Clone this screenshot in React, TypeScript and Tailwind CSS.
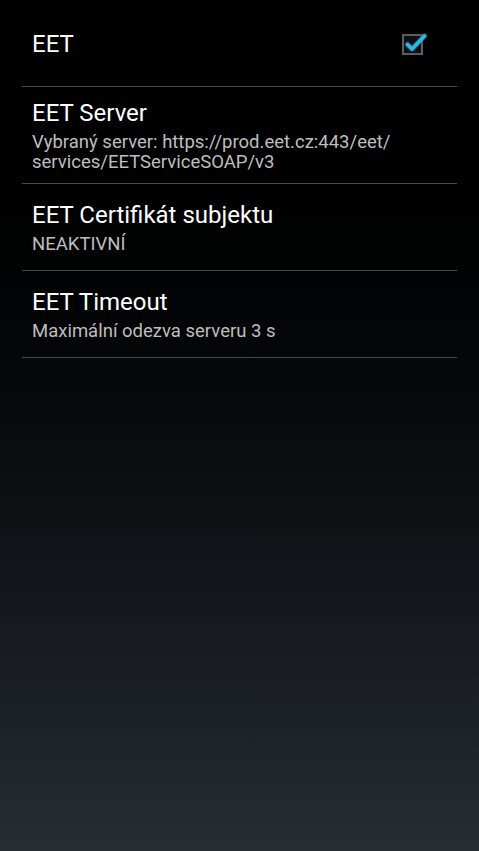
import React from "react";

type Item = { title: string; summary?: string[]; checkbox?: boolean };

const items: Item[] = [
  { title: "EET", checkbox: true },
  {
    title: "EET Server",
    summary: ["Vybraný server: https://prod.eet.cz:443/eet/", "services/EETServiceSOAP/v3"],
  },
  { title: "EET Certifikát subjektu", summary: ["NEAKTIVNÍ"] },
  { title: "EET Timeout", summary: ["Maximální odezva serveru 3 s"] },
];

function CheckBox() {
  return (
    <svg width="30" height="30" viewBox="0 0 30 30" className="shrink-0">
      <rect x="4" y="6" width="19" height="19" fill="#0d0f10" stroke="#5b5e60" strokeWidth="2" />
      <path
        d="M8.5 15.5 L13 20 L25.5 7"
        fill="none"
        stroke="#1e6f8c"
        strokeWidth="6"
        strokeLinecap="round"
        strokeLinejoin="round"
        opacity="0.5"
      />
      <path
        d="M8.5 15.5 L13 20 L25.5 7"
        fill="none"
        stroke="#33b5e5"
        strokeWidth="3.8"
        strokeLinecap="round"
        strokeLinejoin="round"
      />
    </svg>
  );
}

export default function App() {
  return (
    <div
      className="w-full h-[851px] bg-linear-to-b from-black to-[#272d33] overflow-hidden"
      style={{ fontFamily: "Roboto, 'Noto Sans', sans-serif" }}
    >
      <div className="mx-[22px] flex flex-col">
        {items.map((it) => (
          <div key={it.title} className="flex flex-col">
            <div className="flex items-center min-h-[86px] pt-[12px] pb-[11px] pl-[10px] pr-[28px]">
              <div className="flex-1 flex flex-col">
                <div className="text-[24px] leading-[28px] text-white">{it.title}</div>
                {it.summary && (
                  <div className="mt-[5px] text-[18.5px] leading-[20px] text-[#bebebe]">
                    {it.summary.map((s) => (
                      <div key={s}>{s}</div>
                    ))}
                  </div>
                )}
              </div>
              {it.checkbox && <CheckBox />}
            </div>
            <div className="h-px bg-[#4a4a4a]" />
          </div>
        ))}
      </div>
    </div>
  );
}
